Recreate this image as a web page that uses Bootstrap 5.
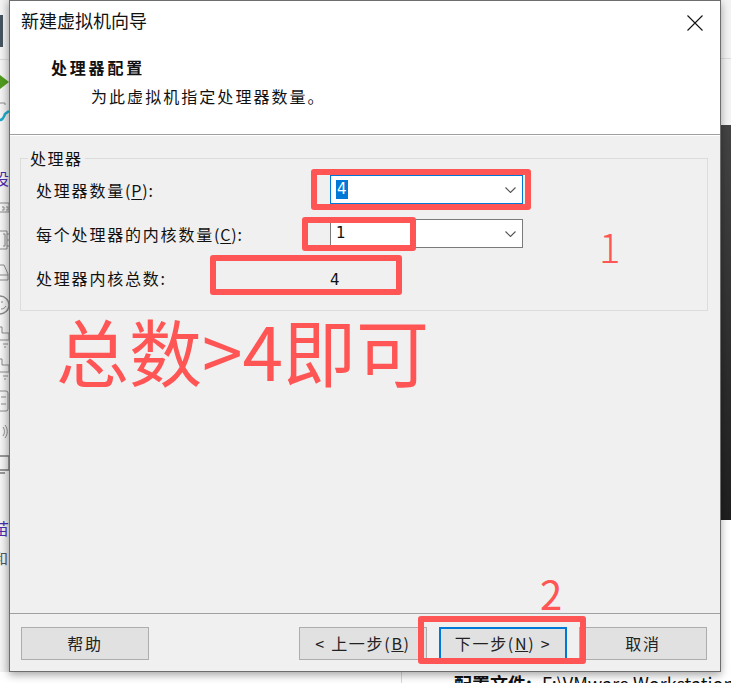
<!DOCTYPE html>
<html lang="zh-CN">
<head>
<meta charset="utf-8">
<title>新建虚拟机向导</title>
<link rel="stylesheet" href="https://cdn.jsdelivr.net/npm/bootstrap@5.3.0/dist/css/bootstrap.min.css">
<style>
html,body{margin:0;background:#fff;overflow:hidden}
body{font-family:"Noto Sans CJK SC","Liberation Sans",sans-serif;color:#111;width:731px;height:683px}
.desk{position:relative;width:731px;height:683px;overflow:hidden}
.upper{height:672px}
.strip-left{width:9px;background:linear-gradient(90deg,#f4f4f4,#e4e4e4)}
.strip-right{width:10px;background:#f3f3f3}
.strip-right .lt{height:125px;background:#f3f3f3;border-bottom:0}
.strip-right .lt i{display:block;height:59px;border-bottom:1px solid #dcdcdc}
.strip-right .dk{height:395px;background:linear-gradient(180deg,#444,#1f1f1f)}
.strip-right .wh{height:152px;background:#fff}
.win{width:712px;height:672px;border:1px solid #6e6e6e;background:#f0f0f0;box-shadow:0 3px 8px rgba(0,0,0,.35);position:relative;z-index:1}
.head{height:134px;background:#fff;border-bottom:1px solid #a0a0a0;box-shadow:0 1px 0 #fff}
.ttl{font-size:18px;line-height:24px;padding:7px 0 0 11px}
.xbtn{width:16px;height:16px;margin:14px 17px 0 0}
.sub1{font-size:16px;font-weight:700;line-height:22px;padding:24px 0 0 41px;letter-spacing:2.8px}
.sub2{font-size:16px;line-height:22px;padding:7px 0 0 81px;letter-spacing:2.05px}
.bodyp{flex:1;padding:23px 12px 0 10px}
.grp{height:153px;border:1px solid #dcdcdc;position:relative;padding:16px 0 0 15px}
.grp-t{position:absolute;left:7px;top:-11px;background:#f0f0f0;padding:0 2px;font-size:16px;line-height:21px;letter-spacing:1.5px}
.frow{height:44px}
.frow.tx{height:46px}
.lbl{width:294px;font-size:16px;letter-spacing:1.8px;line-height:22px;flex:none}
.lbl .lat{letter-spacing:.8px;font-size:16px}
.lbl u{text-underline-offset:2px}
.combo{width:193px;height:29px;background:#fff;border:1px solid #7a7a7a;font-size:15px;line-height:27px;padding-left:5px;font-family:"DejaVu Sans","Liberation Sans",sans-serif}
.combo.on{border-color:#0078d7}
.combo svg{width:11px;height:6px;margin-right:6px}
.sel{background:#0078d7;color:#fff;padding:0 1px;display:inline-block;line-height:19px}
.val{font-size:15px;padding-left:0;font-family:"DejaVu Sans","Liberation Sans",sans-serif;line-height:22px;margin-top:2px}
.foot{height:58px;border-top:1px solid #a0a0a0;padding:13px 13px 0 11px}
.wbtn{width:128px;height:33px;background:#e1e1e1;border:1px solid #adadad;font-size:16px;line-height:31px;text-align:center;color:#222;letter-spacing:1.7px;padding:0;border-radius:0}
.wbtn.pri{border:2px solid #0078d7;line-height:29px}
.gap-a{margin-right:12px}
.mark-box{position:absolute;border:6px solid #ff5555;border-radius:3px;z-index:3}
.mark-t{position:absolute;color:#ff5555;z-index:3;font-family:"Noto Sans CJK SC",sans-serif;white-space:nowrap}
.mk-big{left:56px;top:299px;font-size:73px;line-height:100px;font-weight:400}
.mk-one{left:599px;top:218px;font-size:40px;line-height:56px;font-weight:300}
.mk-two{left:540px;top:565px;font-size:40px;line-height:56px}
.lower{height:11px;overflow:hidden;position:relative}
.lower-rule{width:1px;height:11px;background:#d8d8d8;margin-left:401px}
.lower-t{position:absolute;left:454px;top:-1px;font-size:18px;line-height:24px;white-space:nowrap;color:#111}
.lower-t b{margin-right:6px}
</style>
</head>
<body>
<div class="desk">
  <div class="upper d-flex">
    <svg class="strip-left flex-none" width="9" height="672" viewBox="0 0 9 672">
      <rect x="0" y="15" width="3" height="32" fill="#45535e"/>
      <line x1="0" y1="59.5" x2="9" y2="59.5" stroke="#d6d6d6"/>
      <path d="M0 75 L9 82 L0 89Z" fill="#4f9a1e"/>
      <path d="M0 103h5M5 103v2" stroke="#8a8a8a" fill="none"/>
      <path d="M0 120 C3 120 4 117 5 114 L9 111" stroke="#1aa8c8" stroke-width="2.4" fill="none"/>
      <text x="-7" y="185" font-size="16" fill="#4a2aa8" font-family="Noto Sans CJK SC">设</text>
      <path d="M0 203h9v9H0M2 207h2v3H2M6 207h2v3H6" stroke="#888" fill="none"/>
      <path d="M0 231h7v18H0M3 234h2v12H3M7 234h2M7 240h2M7 246h2" stroke="#888" fill="none"/>
      <path d="M0 265h4l4 9v6H0M0 275h8" stroke="#888" fill="none"/>
      <circle cx="0" cy="305" r="9" stroke="#888" stroke-width="1.4" fill="none"/>
      <path d="M1 302h2M1 309c2 0 4-1 5-3" stroke="#888" fill="none"/>
      <path d="M0 327h2v6h7v7H0M3 344h5M4 347h2" stroke="#888" fill="none"/>
      <path d="M0 359h2v6h7v7H0M3 376h5M4 379h2" stroke="#888" fill="none"/>
      <path d="M0 391h6a2 2 0 0 1 2 2v16a2 2 0 0 1-2 2H0M1 397h5M1 404h5" stroke="#888" fill="none"/>
      <path d="M3 427c2 3 2 6 0 9M5 425c3 4 3 9 0 13" stroke="#888" fill="none"/>
      <path d="M0 456h9v14H0M0 473h5" stroke="#777" stroke-width="1.4" fill="none"/>
      <text x="-7" y="535" font-size="16" fill="#4a2aa8" font-family="Noto Sans CJK SC">苗</text>
      <text x="-7" y="564" font-size="15" fill="#555" font-family="Noto Sans CJK SC">和</text>
    </svg>
    <div class="win d-flex flex-column">
      <div class="head">
        <div class="d-flex justify-content-between">
          <div class="ttl">新建虚拟机向导</div>
          <svg class="xbtn" viewBox="0 0 16 16"><path d="M.5.5l15 15M15.5.5l-15 15" stroke="#111" stroke-width="1.1" fill="none"/></svg>
        </div>
        <div class="sub1">处理器配置</div>
        <div class="sub2">为此虚拟机指定处理器数量。</div>
      </div>
      <div class="bodyp">
        <div class="grp">
          <div class="grp-t">处理器</div>
          <div class="frow d-flex align-items-start">
            <div class="lbl pt-1">处理器数量<span class="lat">(<u>P</u>):</span></div>
            <div class="combo on d-flex justify-content-between align-items-center">
              <span class="sel">4</span>
              <svg viewBox="0 0 11 6"><path d="M.5.5l5 5 5-5" stroke="#555" stroke-width="1.1" fill="none"/></svg>
            </div>
          </div>
          <div class="frow d-flex align-items-start">
            <div class="lbl pt-1">每个处理器的内核数量<span class="lat">(<u>C</u>):</span></div>
            <div class="combo d-flex justify-content-between align-items-center">
              <span>1</span>
              <svg viewBox="0 0 11 6"><path d="M.5.5l5 5 5-5" stroke="#555" stroke-width="1.1" fill="none"/></svg>
            </div>
          </div>
          <div class="frow tx d-flex align-items-start">
            <div class="lbl pt-1">处理器内核总数:</div>
            <div class="val pt-1">4</div>
          </div>
        </div>
      </div>
      <div class="foot d-flex">
        <button class="btn wbtn" type="button">帮助</button>
        <div class="ms-auto d-flex">
          <button class="btn wbtn gap-a" type="button">&lt; 上一步(<u>B</u>)</button>
          <button class="btn wbtn pri gap-a" type="button">下一步(<u>N</u>) &gt;</button>
          <button class="btn wbtn" type="button">取消</button>
        </div>
      </div>
    </div>
    <div class="strip-right flex-none">
      <div class="lt"><i></i></div>
      <div class="dk"></div>
      <div class="wh"></div>
    </div>
  </div>
  <div class="lower">
    <div class="lower-rule"></div>
    <div class="lower-t"><b>配置文件:</b> F:\VMware Workstation</div>
  </div>

  <div class="mark-box" style="left:311px;top:169px;width:220px;height:41px"></div>
  <div class="mark-box" style="left:302px;top:217px;width:114px;height:34px"></div>
  <div class="mark-box" style="left:210px;top:255px;width:192px;height:40px"></div>
  <div class="mark-box" style="left:418px;top:616px;width:168px;height:48px"></div>
  <div class="mark-t mk-big">总数&gt;4即可</div>
  <div class="mark-t mk-one">1</div>
  <div class="mark-t mk-two">2</div>
</div>
<script src="https://cdn.jsdelivr.net/npm/bootstrap@5.3.0/dist/js/bootstrap.bundle.min.js"></script>
</body>
</html>
